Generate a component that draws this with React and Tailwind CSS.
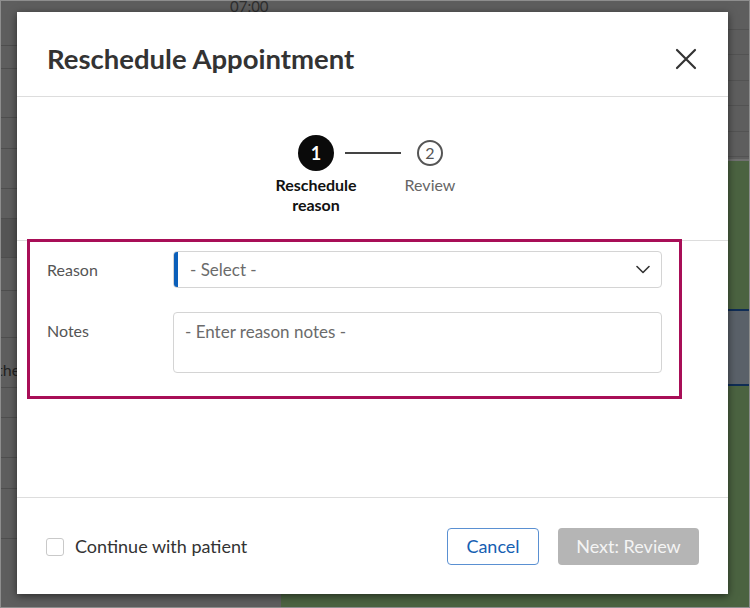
import React from "react";

const font = { fontFamily: "Lato, 'Noto Sans', sans-serif" };

function CalendarBackdrop() {
  const leftRows = [45, 23, 49, 31, 40, 30, 39, 33, 47, 50, 30, 40, 31, 50];
  const rightRows = [29, 25, 26, 25, 26, 25];
  return (
    <div className="flex h-full w-full">
      <div className="flex h-full w-[280px] flex-col bg-[#5e5e5e]">
        {leftRows.map((h, i) => (
          <div
            key={i}
            className={`shrink-0 border-b border-[#4e4e4e] ${i === 6 ? "bg-[#555555]" : ""}`}
            style={{ height: h }}
          />
        ))}
      </div>
      <div className="flex h-full flex-1 flex-col">
        <div className="flex h-[158px] flex-col bg-[#5e5e5e]">
          {rightRows.map((h, i) => (
            <div key={i} className="shrink-0 border-b border-[#535353]" style={{ height: h }} />
          ))}
        </div>
        <div className="h-[150px] border-t-2 border-[#707070] bg-[#4b6341]" />
        <div className="h-[77px] border-y-2 border-[#0f2d55] bg-[#5a6169]" />
        <div className="flex-1 bg-[#4b6341]" />
      </div>
    </div>
  );
}

function CloseIcon() {
  return (
    <svg width="22" height="22" viewBox="0 0 22 22" fill="none">
      <path d="M2 2L20 20M20 2L2 20" stroke="#333" strokeWidth="2.2" strokeLinecap="round" />
    </svg>
  );
}

function Chevron() {
  return (
    <svg width="14" height="9" viewBox="0 0 14 9" fill="none">
      <path d="M1 1.5L7 7.5L13 1.5" stroke="#333" strokeWidth="1.6" strokeLinecap="round" strokeLinejoin="round" />
    </svg>
  );
}

function Stepper() {
  return (
    <div className="h-[144px] shrink-0 border-b border-[#dddddd] pt-[38px]">
      <div className="flex items-center pl-[281px]">
        <div className="flex h-[36px] w-[36px] items-center justify-center rounded-full bg-[#0a0a0a] text-[18px] font-bold text-white">
          1
        </div>
        <div className="ml-[11px] h-[2px] w-[56px] bg-[#444444]" />
        <div className="ml-[16px] flex h-[26px] w-[26px] items-center justify-center rounded-full border-2 border-[#555555] text-[16px] leading-none text-[#555555]">
          2
        </div>
      </div>
      <div className="mt-[4px] flex pl-[249px]">
        <div className="w-[100px] text-center text-[16px] font-bold leading-[20px] text-[#111111]">
          Reschedule
          <br />
          reason
        </div>
        <div className="ml-[34px] w-[60px] text-center text-[16px] leading-[20px] text-[#666666]">Review</div>
      </div>
    </div>
  );
}

function ReasonForm() {
  return (
    <div className="-mt-[2px] ml-[10px] mr-[46px] border-[3px] border-[#a80e57] pb-[23px] pl-[17px] pr-[17px] pt-[9px]">
      <div className="flex">
        <div className="flex h-[37px] w-[126px] shrink-0 items-center text-[16px] text-[#555555]">Reason</div>
        <div className="flex h-[37px] flex-1 items-center overflow-hidden rounded-[4px] border border-[#d4d4d4]">
          <div className="h-full w-[4px] shrink-0 bg-[#0b5fb9]" />
          <div className="flex-1 pl-[12px] text-[17px] text-[#6b6b6b]">- Select -</div>
          <div className="pr-[11px]">
            <Chevron />
          </div>
        </div>
      </div>
      <div className="mt-[24px] flex">
        <div className="w-[126px] shrink-0 pt-[7px] text-[16px] text-[#555555]">Notes</div>
        <textarea
          className="h-[61px] flex-1 resize-none rounded-[4px] border border-[#d4d4d4] px-[11px] pt-[6px] text-[17px] text-[#333] outline-none placeholder:text-[#6b6b6b]"
          style={font}
          placeholder="- Enter reason notes -"
        />
      </div>
    </div>
  );
}

function Footer() {
  return (
    <div className="mt-auto flex h-[97px] shrink-0 items-center justify-between border-t border-[#dddddd] px-[29px] pt-[1px]">
      <label className="flex items-center">
        <span className="h-[18px] w-[18px] rounded-[3px] border border-[#c9c9c9] bg-white" />
        <span className="ml-[11px] text-[18px] text-[#333333]">Continue with patient</span>
      </label>
      <div className="flex items-center gap-[19px]">
        <button className="h-[37px] w-[92px] rounded-[4px] border border-[#5a90d2] bg-white text-[18px] text-[#1660b2]" style={font}>
          Cancel
        </button>
        <button className="h-[37px] w-[141px] rounded-[4px] bg-[#b5b5b5] text-[18px] text-[#f4f4f4]" style={font}>
          Next: Review
        </button>
      </div>
    </div>
  );
}

export default function App() {
  return (
    <div className="relative h-[608px] w-[750px] overflow-hidden border border-[#8e8e8e] bg-[#5e5e5e]" style={font}>
      <CalendarBackdrop />
      <div className="absolute left-[229px] top-[-6px] text-[15px] text-[#2e2e2e]">07:00</div>
      <div className="absolute left-[-4px] top-[357px] text-[16px] text-[#222222]">the</div>
      <div className="absolute left-[16px] top-[11px] flex h-[582px] w-[711px] flex-col bg-white shadow-[0_2px_8px_rgba(0,0,0,0.55)]">
        <div className="flex h-[85px] shrink-0 items-center justify-between border-b border-[#dddddd] pl-[30px] pr-[31px] pt-[10px]">
          <h1 className="text-[27.5px] font-bold text-[#333333]">Reschedule Appointment</h1>
          <CloseIcon />
        </div>
        <Stepper />
        <ReasonForm />
        <Footer />
      </div>
    </div>
  );
}
